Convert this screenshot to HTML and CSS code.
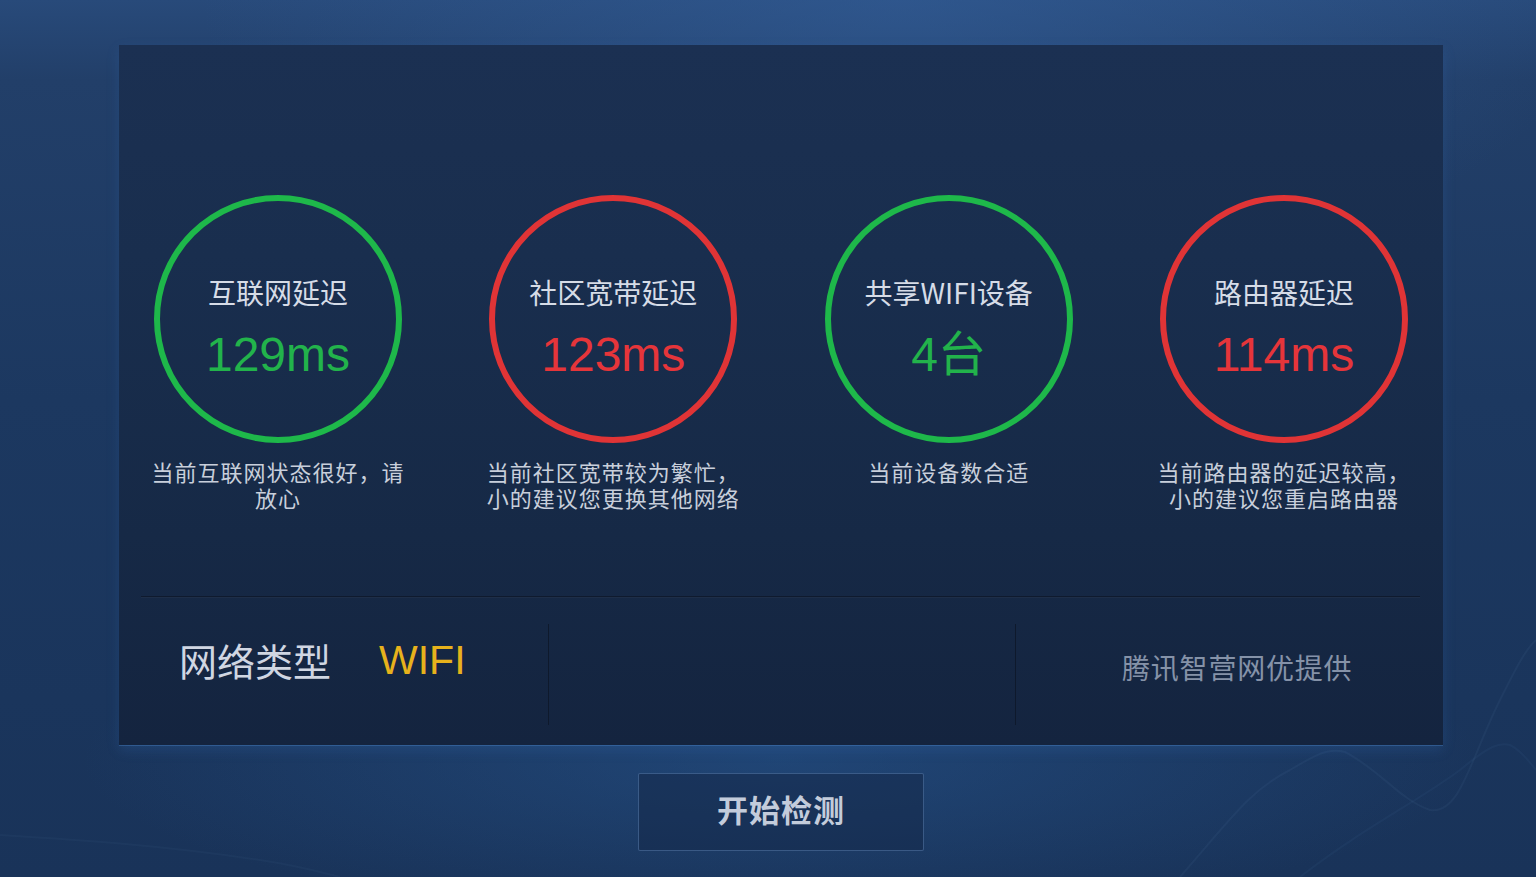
FILE: index.html
```html
<!DOCTYPE html>
<html lang="zh-CN">
<head>
<meta charset="utf-8">
<title>网络检测</title>
<link rel="stylesheet" href="styles.css">
</head>
<body>
<svg class="bg-lines" width="1536" height="877" viewBox="0 0 1536 877" aria-hidden="true">
  <path d="M1180 877 C1230 820 1250 790 1290 770 C1320 752 1330 748 1345 752 C1380 770 1400 800 1430 810 C1460 815 1470 760 1500 700 C1515 670 1525 650 1536 640" fill="none" stroke="rgba(110,150,200,0.07)" stroke-width="2"/>
  <path d="M1300 877 C1360 830 1420 800 1460 770 C1490 745 1500 742 1510 745 C1520 750 1528 760 1536 770" fill="none" stroke="rgba(110,150,200,0.06)" stroke-width="2"/>
  <path d="M0 835 C80 840 160 845 260 860 C300 866 320 872 340 877" fill="none" stroke="rgba(110,150,200,0.05)" stroke-width="2"/>
</svg>
<div class="stage">
  <section class="panel">
    <div class="metrics">
      <div class="metric">
        <div class="ring ring-good">
          <div class="ring-title">互联网延迟</div>
          <div class="ring-value good">129ms</div>
        </div>
        <p class="desc">当前互联网状态很好，请放心</p>
      </div>
      <div class="metric">
        <div class="ring ring-bad">
          <div class="ring-title">社区宽带延迟</div>
          <div class="ring-value bad">123ms</div>
        </div>
        <p class="desc">当前社区宽带较为繁忙，小的建议您更换其他网络</p>
      </div>
      <div class="metric">
        <div class="ring ring-good">
          <div class="ring-title">共享WIFI设备</div>
          <div class="ring-value good">4台</div>
        </div>
        <p class="desc">当前设备数合适</p>
      </div>
      <div class="metric">
        <div class="ring ring-bad">
          <div class="ring-title">路由器延迟</div>
          <div class="ring-value bad">114ms</div>
        </div>
        <p class="desc">当前路由器的延迟较高，小的建议您重启路由器</p>
      </div>
    </div>
    <div class="divider"></div>
    <div class="info">
      <div class="cell cell-left">
        <span class="info-label">网络类型</span>
        <span class="info-value">WIFI</span>
      </div>
      <div class="vsep"></div>
      <div class="cell cell-mid"></div>
      <div class="vsep"></div>
      <div class="cell cell-right">
        <span class="provider">腾讯智营网优提供</span>
      </div>
    </div>
  </section>
  <div class="actions">
    <button class="start-btn" type="button">开始检测</button>
  </div>
</div>
</body>
</html>
```
FILE: styles.css
```css
html, body {
  margin: 0;
  padding: 0;
}
body {
  width: 1536px;
  height: 877px;
  overflow: hidden;
  position: relative;
  font-family: "Noto Sans CJK SC", "Noto Sans", sans-serif;
  background:
    radial-gradient(ellipse 700px 300px at 900px 0px, rgba(52, 96, 156, 0.55), rgba(52, 96, 156, 0) 100%),
    radial-gradient(ellipse 700px 160px at 781px 760px, rgba(40, 90, 150, 0.45), rgba(40, 90, 150, 0) 100%),
    linear-gradient(180deg, #284a7a 0px, #223f69 80px, #1c3860 400px, #1a355c 700px, #193359 877px);
}
.bg-lines {
  position: absolute;
  left: 0;
  top: 0;
  pointer-events: none;
}
.stage {
  position: relative;
  width: 1324px;
  margin-left: 119px;
  padding-top: 45px;
}
.panel {
  height: 700px;
  background: linear-gradient(180deg, #1b3052 0%, #192e4e 30%, #162946 70%, #14243f 100%);
  display: flex;
  flex-direction: column;
  box-shadow: 0 1px 0 rgba(80, 140, 210, 0.35), 0 5px 12px rgba(60, 120, 200, 0.2);
}
.metrics {
  height: 551px;
  box-sizing: border-box;
  padding: 150px 35px 0;
  display: flex;
  justify-content: space-between;
}
.metric {
  width: 248px;
  display: flex;
  flex-direction: column;
  align-items: center;
}
.ring {
  width: 248px;
  height: 248px;
  box-sizing: border-box;
  border-radius: 50%;
  border: 6px solid;
  display: flex;
  flex-direction: column;
  align-items: center;
  justify-content: center;
  padding-top: 18px;
}
.ring-good { border-color: #1eb84a; }
.ring-bad { border-color: #e03436; }
.ring-title {
  font-size: 28px;
  line-height: 36px;
  color: #d6dce7;
}
.ring-value {
  margin-top: 17px;
  font-family: "Liberation Sans", "Noto Sans CJK SC", sans-serif;
  font-size: 48px;
  line-height: 56px;
}
.good { color: #22b34b; }
.bad { color: #e6353a; }
.desc {
  margin: 15px 0 0;
  width: 262px;
  text-align: center;
  font-size: 22px;
  letter-spacing: 1px;
  line-height: 26px;
  color: #c8cfdb;
}
.divider {
  height: 1px;
  margin: 0 23px 0 22px;
  background: #0f1a2e;
  border-bottom: 1px solid rgba(60, 85, 120, 0.35);
}
.info {
  flex: 1;
  display: flex;
}
.cell {
  display: flex;
  align-items: center;
}
.cell-left {
  width: 429px;
  box-sizing: border-box;
  padding: 0 0 24px 60px;
}
.cell-mid {
  width: 466px;
}
.cell-right {
  flex: 1;
  padding: 0 0 10px 106px;
}
.vsep {
  width: 1px;
  margin: 26px 0 20px;
  background: #0e192c;
}
.info-label {
  font-size: 38px;
  line-height: 50px;
  color: #d0d6e2;
}
.info-value {
  margin-left: 48px;
  font-family: "Liberation Sans", sans-serif;
  font-size: 41px;
  line-height: 50px;
  color: #e7b21c;
}
.provider {
  font-size: 28px;
  letter-spacing: 0.8px;
  line-height: 40px;
  color: #8592a8;
}
.actions {
  display: flex;
  justify-content: center;
  padding-top: 28px;
}
.start-btn {
  width: 286px;
  height: 78px;
  box-sizing: border-box;
  border: 1px solid rgba(100, 140, 190, 0.45);
  border-radius: 2px;
  background: rgba(20, 40, 72, 0.55);
  color: #c3ccdb;
  font-family: "Noto Sans CJK SC", sans-serif;
  font-size: 31px;
  font-weight: 700;
  letter-spacing: 1px;
  padding: 0 0 8px;
  cursor: pointer;
}
```
